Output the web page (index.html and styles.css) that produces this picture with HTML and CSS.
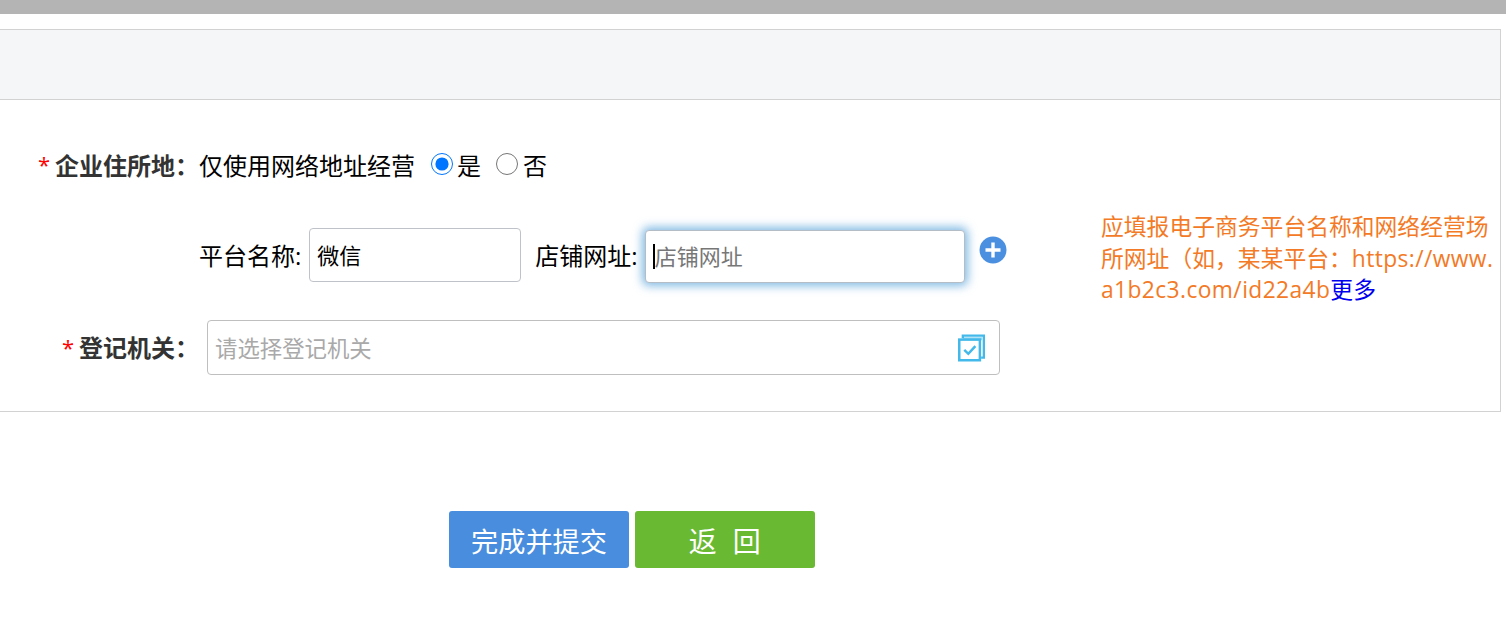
FILE: index.html
```html
<!DOCTYPE html>
<html lang="zh-CN">
<head>
<meta charset="utf-8">
<title>企业住所地</title>
<link rel="stylesheet" href="styles.css">
</head>
<body>
<div class="topbar"></div>
<section class="panel">
  <div class="panel-head"></div>
  <div class="panel-body">
    <div class="fields">
      <div class="row row-address">
        <span class="star">*</span>
        <span class="label">企业住所地：</span>
        <span class="text">仅使用网络地址经营</span>
        <input class="radio radio-yes" type="radio" name="online" checked>
        <span class="text">是</span>
        <input class="radio radio-no" type="radio" name="online">
        <span class="text">否</span>
      </div>
      <div class="row row-shop">
        <span class="text-shop">平台名称:</span>
        <input class="input input-name" type="text" value="微信">
        <span class="text-shop shop-label">店铺网址:</span>
        <span class="caret-wrap">
          <input class="input input-url" type="text" placeholder="店铺网址">
          <span class="caret"></span>
        </span>
        <svg class="plus" viewBox="0 0 28 28" width="28" height="28" aria-hidden="true">
          <circle cx="14" cy="14" r="13.5" fill="#4a8fe0"/>
          <path d="M14 6.5v15M6.5 14h15" stroke="#fff" stroke-width="3.4" fill="none"/>
        </svg>
      </div>
      <div class="row row-office">
        <span class="star">*</span>
        <span class="label label-office">登记机关：</span>
        <div class="select">
          <span class="select-text">请选择登记机关</span>
          <svg class="select-icon" viewBox="0 0 28 28" width="27" height="28" aria-hidden="true">
            <path d="M5 4V1.2h21.8V24H24" fill="none" stroke="#42b9ea" stroke-width="2.4"/>
            <path d="M5 3.8h19V6" fill="none" stroke="#42b9ea" stroke-width="2" opacity=".55"/>
            <rect x="1.3" y="5.3" width="21.4" height="21.4" fill="#fff" stroke="#42b9ea" stroke-width="2.6"/>
            <path d="M6.5 16l4.2 4 7.3-8" fill="none" stroke="#42b9ea" stroke-width="2.6"/>
          </svg>
        </div>
      </div>
    </div>
    <p class="hint">应填报电子商务平台名称和网络经营场所网址（如，某某平台：<span class="latin">https://www.a1b2c3.com/id22a4b</span><a class="more" href="#">更多</a></p>
  </div>
</section>
<div class="actions">
  <button class="btn btn-submit" type="button">完成并提交</button>
  <button class="btn btn-back" type="button">返&nbsp;&nbsp;回</button>
</div>
</body>
</html>
```
FILE: styles.css
```css
* {
  box-sizing: border-box;
}

html,
body {
  margin: 0;
  height: 631px;
  overflow: hidden;
  background: #fff;
}

body {
  font-family: "Open Sans", "Noto Sans CJK SC", sans-serif;
  font-size: 24px;
  color: #000;
}

.topbar {
  height: 14px;
  background: #b4b4b4;
}

.panel {
  width: 1502px;
  height: 383px;
  margin: 15px 0 0 -1px;
  border: 1px solid #d2d2d2;
}

.panel-head {
  height: 70px;
  background: #f5f6f8;
  border-bottom: 1px solid #d2d2d2;
}

.panel-body {
  display: flex;
}

.fields {
  width: 1101px;
  flex: none;
  padding-top: 46px;
}

.row {
  display: flex;
  align-items: center;
}

.row-address {
  height: 40px;
  padding-left: 38px;
}

.star {
  color: #f00;
  font-size: 22px;
  width: 17px;
  flex: none;
  padding-bottom: 4px;
}

.label {
  font-weight: 700;
  color: #333;
  white-space: nowrap;
  padding-bottom: 4px;
}

.text {
  white-space: nowrap;
  padding-bottom: 4px;
}

.text-shop {
  white-space: nowrap;
  padding-bottom: 2px;
}

.radio {
  width: 22px;
  height: 22px;
  margin: 0 4px 4px 16px;
  flex: none;
}

.radio-no {
  margin: 0 5px 4px 15px;
}

.row-shop {
  margin-top: 42px;
  height: 54px;
  padding-left: 199px;
}

.input {
  font: inherit;
  font-size: 22px;
  border: 1px solid #bfc3c9;
  border-radius: 4px;
  padding: 0 7px 2px;
  color: #000;
  background: #fff;
  outline: none;
}

.input::placeholder {
  color: #777;
}

.input-name {
  width: 212px;
  height: 54px;
  margin-left: 8px;
}

.shop-label {
  margin-left: 14px;
}

.caret-wrap {
  position: relative;
  display: block;
  margin: 3px 0 0 7px;
  height: 53px;
}

.input-url {
  display: block;
  width: 320px;
  height: 53px;
  padding-left: 9px;
  border-color: #b4bcc6;
  box-shadow: 0 0 10px 3px rgba(66, 150, 214, 0.65);
}

.caret {
  position: absolute;
  left: 8px;
  top: 14px;
  width: 2px;
  height: 25px;
  background: #000;
}

.plus {
  flex: none;
  margin: 0 0 10px 14px;
}

.row-office {
  margin-top: 38px;
  height: 55px;
  padding-left: 62px;
}

.label-office {
  width: 128px;
  flex: none;
  padding-bottom: 2px;
}

.row-office .star {
  padding-bottom: 2px;
}

.select {
  width: 793px;
  height: 55px;
  display: flex;
  align-items: center;
  justify-content: space-between;
  padding: 0 14px 0 7px;
  border: 1px solid #bfbfbf;
  border-radius: 4px;
  font-size: 22.4px;
  color: #a9a9a9;
}

.select-icon {
  flex: none;
}

.hint {
  width: 396px;
  margin: 111px 0 0;
  font-size: 22.8px;
  line-height: 31.5px;
  color: #f37a26;
  word-break: break-all;
}

.latin {
  letter-spacing: 0.4px;
}

.more {
  color: #0000ee;
  text-decoration: none;
}

.actions {
  display: flex;
  gap: 6px;
  margin: 99px 0 0 449px;
}

.btn {
  width: 180px;
  height: 57px;
  border: 0;
  border-radius: 3px;
  font: inherit;
  font-size: 27.2px;
  color: #fff;
  padding: 0;
}

.btn-submit {
  background: #488dde;
}

.btn-back {
  background: #6ab933;
  font-size: 28px;
  letter-spacing: 0.5px;
}
```
